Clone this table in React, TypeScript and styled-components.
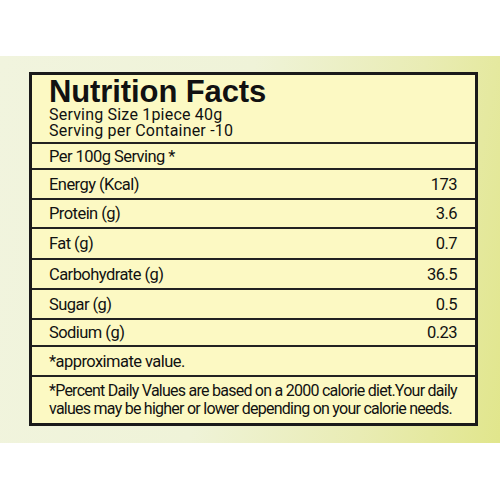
import React, { FC, ReactElement } from "react"
import styled, { createGlobalStyle } from "styled-components"

type Nutrient = {
  label: string
  value: string
  height: number
}

const nutrients: Nutrient[] = [
  { label: "Energy (Kcal)", value: "173", height: 30 },
  { label: "Protein (g)", value: "3.6", height: 29 },
  { label: "Fat (g)", value: "0.7", height: 31 },
  { label: "Carbohydrate (g)", value: "36.5", height: 30 },
  { label: "Sugar (g)", value: "0.5", height: 30 },
  { label: "Sodium (g)", value: "0.23", height: 27 },
]

export const App: FC = (): ReactElement => {
  return (
    <>
      <GlobalStyle />
      <Band>
        <Label>
          <Header>
            <Title>Nutrition Facts</Title>
            <SubLine>Serving Size 1piece 40g</SubLine>
            <SubLine>Serving per Container -10</SubLine>
          </Header>
          <Row height={26}>
            <Name>Per 100g Serving *</Name>
          </Row>
          {nutrients.map((n) => (
            <Row key={n.label} height={n.height}>
              <Name>{n.label}</Name>
              <Value>{n.value}</Value>
            </Row>
          ))}
          <Row height={30}>
            <Name>*approximate value.</Name>
          </Row>
          <Footer>
            <FooterLine>*Percent Daily Values are based on a 2000 calorie diet.Your daily</FooterLine>
            <FooterLine>values may be higher or lower depending on your calorie needs.</FooterLine>
          </Footer>
        </Label>
      </Band>
    </>
  )
}

export default App

const GlobalStyle = createGlobalStyle`
  html, body {
    margin: 0;
    padding: 0;
    background: #ffffff;
  }
  body {
    width: 500px;
    height: 500px;
    overflow: hidden;
    font-family: Roboto, "Liberation Sans", Arial, sans-serif;
    color: #111111;
  }
`

const Band = styled.div`
  margin-top: 56px;
  height: 387px;
  box-sizing: border-box;
  padding: 16px 0 0 29px;
  background: linear-gradient(100deg, #f1f4de 0%, #eff3d8 45%, #e9ecb4 75%, #e1e68c 100%);
`

const Label = styled.div`
  width: 449px;
  height: 354px;
  box-sizing: border-box;
  border: 3px solid #1a1a1a;
  background: #fcf9c3;
  display: flex;
  flex-direction: column;
`

const Header = styled.div`
  height: 67px;
  box-sizing: border-box;
  padding: 1px 18px 0 17px;
  display: flex;
  flex-direction: column;
`

const Title = styled.div`
  font-family: "Liberation Sans", Arial, sans-serif;
  font-size: 31px;
  line-height: 31px;
  font-weight: bold;
  letter-spacing: -0.1px;
`

const SubLine = styled.div`
  font-size: 16px;
  line-height: 16px;
  letter-spacing: 0.2px;
  white-space: nowrap;
`

const Row = styled.div<{ height: number }>`
  height: ${({ height }) => height}px;
  box-sizing: border-box;
  border-top: 2px solid #222222;
  padding: 0 18px 0 17px;
  display: flex;
  align-items: center;
  justify-content: space-between;
  font-size: 16.5px;
  letter-spacing: -0.55px;
`

const Name = styled.span``

const Value = styled.span`
  text-align: right;
`

const Footer = styled.div`
  flex: 1;
  box-sizing: border-box;
  border-top: 2px solid #222222;
  padding: 5px 10px 0 17px;
  display: flex;
  flex-direction: column;
`

const FooterLine = styled.div`
  font-size: 16px;
  line-height: 18px;
  letter-spacing: -0.75px;
  white-space: nowrap;
`
